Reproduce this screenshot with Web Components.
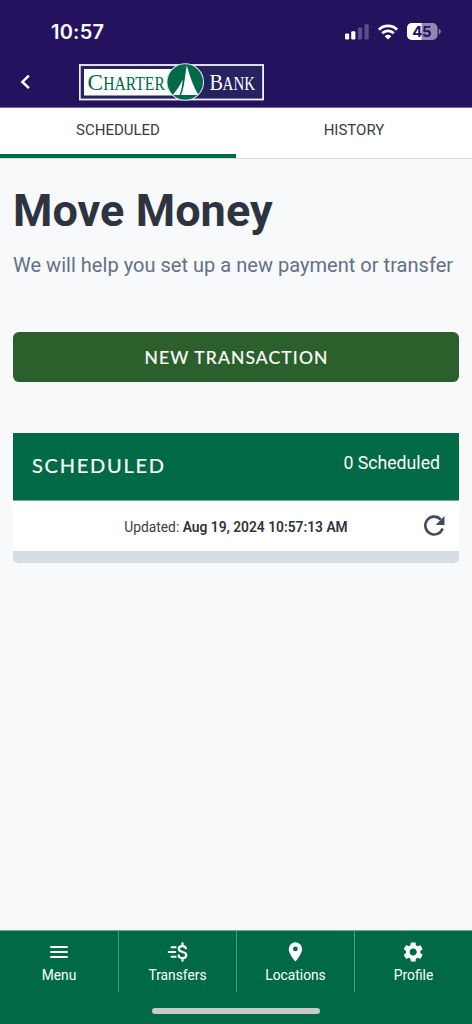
<!DOCTYPE html>
<html lang="en">
<head>
<meta charset="utf-8">
<title>Move Money</title>
<style>
html,body{margin:0;height:100%}
body{font-family:Roboto,"Liberation Sans",sans-serif;background:#f8f9fb;color:#2d3440;overflow:hidden}
</style>
</head>
<body>
<bank-app></bank-app>
<script>
const define = (name, html) => {
  const t = document.createElement('template');
  t.innerHTML = html;
  customElements.define(name, class extends HTMLElement {
    constructor() {
      super();
      this.attachShadow({ mode: 'open' }).append(t.content.cloneNode(true));
    }
  });
};

define('status-bar', `
<style>
:host{display:flex;height:62px;box-sizing:border-box;padding:0 31.5px 0 51px;justify-content:space-between;align-items:center;color:#fff}
.time{font:600 20px/24px Inter,sans-serif;letter-spacing:.2px;margin-top:2px}
.right{display:flex;align-items:center;gap:9px;margin-top:1px}
svg{display:block}
.battery text{font:700 15px Inter,sans-serif;fill:#25125f}
</style>
<span class="time">10:57</span>
<div class="right">
<svg width="24" height="16" viewBox="0 0 24 16"><g fill="#fff"><rect x="0" y="9.5" width="4.2" height="6" rx="1.2"/><rect x="6.2" y="7.2" width="4.2" height="8.3" rx="1.2"/><g opacity=".25"><rect x="12.9" y="3.5" width="4.2" height="12" rx="1.2"/><rect x="19.5" y="0.2" width="4.2" height="15.3" rx="1.2"/></g></g></svg>
<svg width="20" height="16" viewBox="0 0 20 16"><g fill="none" stroke="#fff" stroke-width="2.7"><path d="M.9 5.7a12.9 12.9 0 0 1 18.2 0"/><path d="M4.2 9.3a8.2 8.2 0 0 1 11.6 0"/></g><path d="M10 15.5 6.7 12.2a4.7 4.7 0 0 1 6.6 0z" fill="#fff"/></svg>
<svg class="battery" width="34" height="17" viewBox="0 0 34 17"><defs><clipPath id="c"><rect width="30.5" height="17" rx="5"/></clipPath></defs><g clip-path="url(#c)"><rect width="31" height="17" fill="#9287af"/><rect width="14.5" height="17" fill="#fff"/></g><path d="M31.8 5.8q2 .8 2 2.8t-2 2.8z" fill="#9287af"/><text x="5.2" y="13.9" textLength="19.5">45</text></svg>
</div>`);

define('bank-logo', `
<style>:host{display:block;width:186px;height:40px}svg{display:block}
text{font-family:"Liberation Serif",serif}</style>
<svg width="186" height="40" viewBox="0 0 186 40">
<rect x="0.8" y="3" width="183.3" height="34.5" fill="#25225f" stroke="#f2f0f7" stroke-width="1.8"/>
<rect x="5" y="7" width="97" height="26.5" fill="#fff"/>
<circle cx="106.2" cy="20" r="18.3" fill="#006a47" stroke="#d9dce6" stroke-width="1.1"/>
<path d="M107.8 3.5C105.4 17 105.4 26 102 33h17.5C114.5 25 111 15 107.8 3.5z" fill="#fff"/>
<path d="M103.7 17.5C101 24 97 29 93.8 33h6.7C102.5 28 103.2 24 103.7 17.5z" fill="#fff"/>
<g fill="#006a47"><text x="8.5" y="27.6" font-size="22.5" textLength="15.5" lengthAdjust="spacingAndGlyphs">C</text><text x="24.3" y="27.6" font-size="19" textLength="61.5" lengthAdjust="spacingAndGlyphs">HARTER</text></g>
<g fill="#fff"><text x="130.5" y="27.6" font-size="22.5" textLength="13.5" lengthAdjust="spacingAndGlyphs">B</text><text x="143.6" y="27.6" font-size="18.5" textLength="32.4" lengthAdjust="spacingAndGlyphs">ANK</text></g>
</svg>`);

define('app-header', `
<style>
:host{display:block;height:108px;box-sizing:border-box;background:#25125f;border-bottom:1px solid #786da0}
.nav{display:flex;align-items:center;height:40px;padding-left:20px;gap:49px}
svg{display:block}
</style>
<status-bar></status-bar>
<div class="nav"><svg width="10" height="16" viewBox="0 0 10 16"><path d="M8.9 1.6 2.4 7.9l6.5 6.3" fill="none" stroke="#fff" stroke-width="2.5"/></svg><bank-logo></bank-logo></div>`);

define('tab-item', `
<style>
:host{flex:1;box-sizing:border-box;height:50px;padding-top:13px;text-align:center;font-size:15px;line-height:18px;color:#363c47;border-bottom:4px solid transparent}
:host([active]){border-bottom-color:#006a47}
</style><slot></slot>`);

define('tab-bar', `
<style>:host{display:flex;height:51px;box-sizing:border-box;background:#fff;border-bottom:1px solid #d3dadd}</style><slot></slot>`);

define('primary-button', `
<style>
:host{display:block}
button{display:block;width:100%;height:50px;border:0;border-radius:6px;background:#2b602c;color:#fff;font:400 17.5px/51px Lato,sans-serif;-webkit-text-stroke:.2px #fff;letter-spacing:1.15px;padding:0 0 0 1px}
</style><button><slot></slot></button>`);

define('schedule-card', `
<style>
:host{display:block;border-bottom:12px solid #d8dce4;border-radius:0 0 5px 5px}
header{display:flex;justify-content:space-between;height:67.5px;box-sizing:border-box;padding:0 19px;background:#006a47;color:#fff;border-bottom:1px solid #71a995}
h2{margin:0;font:400 20px/65px Lato,sans-serif;-webkit-text-stroke:.2px #fff;letter-spacing:1.75px}
.count{font-size:17.7px;line-height:61px}
.body{display:grid;grid-template-columns:1fr 24px;height:50.5px;padding-right:13px;background:#fff;align-items:center}
.updated{padding-left:37px;text-align:center;font-size:13.8px;line-height:20px;padding-top:2px;color:#3a404b}
svg{display:block}
::slotted(b){font-weight:600;color:#2d3440}
</style>
<header><h2><slot name="title"></slot></h2><span class="count"><slot name="count"></slot></span></header>
<div class="body"><span class="updated"><slot></slot></span>
<svg width="24" height="24" viewBox="0 0 24 24" fill="none"><path d="M18.8 5.6A8.9 8.9 0 1 0 20.6 14.5" stroke="#434c5c" stroke-width="2.6"/><path d="M22.5 2v8.9h-8.9z" fill="#434c5c"/></svg></div>`);

define('nav-item', `
<style>
:host{flex:0 0 118px;box-sizing:border-box;display:flex;flex-direction:column;align-items:center;height:61px;padding-top:10px;color:#fff;border-right:1px solid #4d9780}
:host(:first-child){flex-basis:119px}
:host(:last-child){border-right:0;flex-basis:117px}
span{font-size:13.8px;line-height:18px;margin-top:3px}
::slotted(svg){display:block;width:22px;height:22px}
</style><slot name="icon"></slot><span><slot></slot></span>`);

define('bottom-nav', `
<style>
:host{display:block;height:94px;box-sizing:border-box;background:#006a47;border-top:1px solid #6fa794}
.row{display:flex}
.home{width:168px;height:6px;border-radius:3px;background:#c9c9c9;margin:16px auto 0}
</style><div class="row"><slot></slot></div><div class="home"></div>`);

define('bank-app', `
<style>
:host{display:flex;flex-direction:column;width:472px;height:1024px}
main{flex:1;padding:0 13px}
h1{margin:25px 0 0;font-size:45px;line-height:54px;font-weight:700;color:#2d3440;letter-spacing:.05px}
p{margin:15px 0 0;font-size:20px;line-height:25px;color:#627087;white-space:nowrap;letter-spacing:.03px}
primary-button{margin-top:54px}
schedule-card{margin-top:51px}
</style>
<app-header></app-header>
<tab-bar><tab-item active>SCHEDULED</tab-item><tab-item>HISTORY</tab-item></tab-bar>
<main>
<h1>Move Money</h1>
<p>We will help you set up a new payment or transfer</p>
<primary-button>NEW TRANSACTION</primary-button>
<schedule-card><span slot="title">SCHEDULED</span><span slot="count">0 Scheduled</span>Updated: <b>Aug 19, 2024 10:57:13 AM</b></schedule-card>
</main>
<bottom-nav>
<nav-item><svg slot="icon" viewBox="0 0 22 22"><path d="M2.3 6h17.4M2.3 11h17.4M2.3 16h17.4" stroke="#fff" stroke-width="2"/></svg>Menu</nav-item>
<nav-item><svg slot="icon" viewBox="0.5 0 22 22" fill="none" stroke="#fff" stroke-width="2"><path d="M4.3 6.3h5.6M1.4 11h8.2M4.3 15.7h5.6"/><path stroke-width="2.2" d="M19.5 8.3C19.4 6.3 18 5.1 15.9 5.1c-2.2 0-3.6 1.1-3.6 2.9 0 4.1 7.5 1.8 7.5 6 0 1.9-1.5 3.1-3.8 3.1s-3.9-1.3-4-3.6M16 1.6v3.5M16 17.1v3.4"/></svg>Transfers</nav-item>
<nav-item><svg slot="icon" viewBox="0.6 0 22 22"><path fill="#fff" fill-rule="evenodd" d="M11 1.2a6.7 6.7 0 0 0-6.7 6.7C4.3 13 11 20.5 11 20.5S17.7 13 17.7 7.9A6.7 6.7 0 0 0 11 1.2zm0 9.1a2.4 2.4 0 1 1 0-4.8 2.4 2.4 0 0 1 0 4.8z"/></svg>Locations</nav-item>
<nav-item><svg slot="icon" viewBox="1.8 1 22 22"><path fill="#fff" d="M19.14 12.94c.04-.3.06-.61.06-.94 0-.32-.02-.64-.07-.94l2.03-1.58c.18-.14.23-.41.12-.61l-1.92-3.32c-.12-.22-.37-.29-.59-.22l-2.39.96c-.5-.38-1.03-.7-1.62-.94l-.36-2.54c-.04-.24-.24-.41-.48-.41h-3.84c-.24 0-.43.17-.47.41l-.36 2.54c-.59.24-1.13.57-1.62.94l-2.39-.96c-.22-.08-.47 0-.59.22L2.74 8.87c-.12.21-.08.47.12.61l2.03 1.58c-.05.3-.09.63-.09.94s.02.64.07.94l-2.03 1.58c-.18.14-.23.41-.12.61l1.92 3.32c.12.22.37.29.59.22l2.39-.96c.5.38 1.03.7 1.62.94l.36 2.54c.05.24.24.41.48.41h3.84c.24 0 .44-.17.47-.41l.36-2.54c.59-.24 1.13-.56 1.62-.94l2.39.96c.22.08.47 0 .59-.22l1.92-3.32c.12-.22.07-.47-.12-.61l-2.01-1.58zM12 15.6c-1.98 0-3.6-1.62-3.6-3.6s1.62-3.6 3.6-3.6 3.6 1.62 3.6 3.6-1.62 3.6-3.6 3.6z"/></svg>Profile</nav-item>
</bottom-nav>`);
</script>
</body>
</html>
